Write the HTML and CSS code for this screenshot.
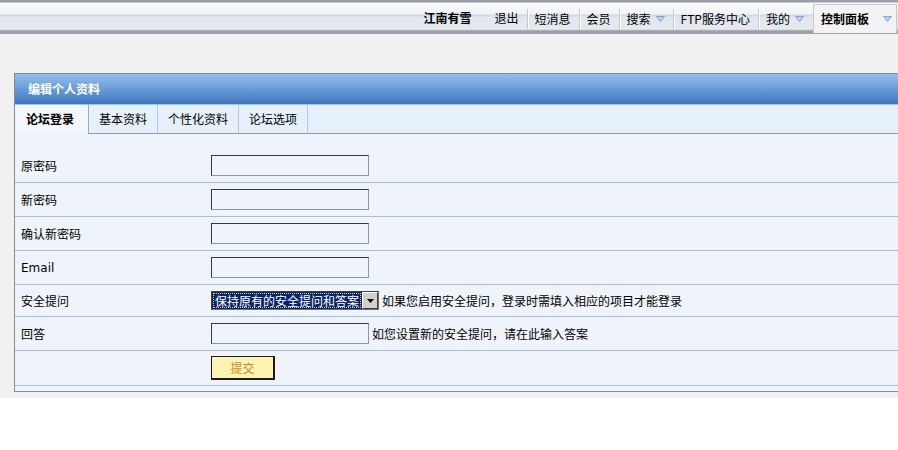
FILE: index.html
```html
<!DOCTYPE html>
<html lang="zh-CN">
<head>
<meta charset="utf-8">
<title>编辑个人资料</title>
<link rel="stylesheet" href="styles.css">
</head>
<body>
<div class="page">
  <div class="topbar">
    <ul class="nav">
      <li class="nav-item user">江南有雪</li>
      <li class="nav-item">退出</li>
      <li class="nav-item sep">短消息</li>
      <li class="nav-item sep">会员</li>
      <li class="nav-item sep">搜索<span class="arrow"><svg width="9" height="6" viewBox="0 0 9 6"><path d="M0.5 0.5 L8.5 0.5 L4.5 5.5 Z" fill="#bcd3ee" stroke="#7fa4d4" stroke-width="1"/></svg></span></li>
      <li class="nav-item sep">FTP服务中心</li>
      <li class="nav-item sep">我的<span class="arrow"><svg width="9" height="6" viewBox="0 0 9 6"><path d="M0.5 0.5 L8.5 0.5 L4.5 5.5 Z" fill="#bcd3ee" stroke="#7fa4d4" stroke-width="1"/></svg></span></li>
      <li class="nav-item current">控制面板<span class="arrow"><svg width="9" height="6" viewBox="0 0 9 6"><path d="M0.5 0.5 L8.5 0.5 L4.5 5.5 Z" fill="#bcd3ee" stroke="#7fa4d4" stroke-width="1"/></svg></span></li>
    </ul>
  </div>

  <div class="panel">
    <div class="panel-head">编辑个人资料</div>
    <ul class="tabs">
      <li class="tab active">论坛登录</li>
      <li class="tab">基本资料</li>
      <li class="tab">个性化资料</li>
      <li class="tab">论坛选项</li>
    </ul>
    <div class="form">
      <div class="row">
        <div class="label">原密码</div>
        <div class="field"><input class="txt" type="password"></div>
      </div>
      <div class="row">
        <div class="label">新密码</div>
        <div class="field"><input class="txt" type="password"></div>
      </div>
      <div class="row">
        <div class="label">确认新密码</div>
        <div class="field"><input class="txt" type="password"></div>
      </div>
      <div class="row">
        <div class="label latin">Email</div>
        <div class="field"><input class="txt" type="text"></div>
      </div>
      <div class="row row-short">
        <div class="label">安全提问</div>
        <div class="field">
          <div class="select">
            <span class="select-value"><span class="select-focus">保持原有的安全提问和答案</span></span>
            <span class="select-btn"><svg width="7" height="4" viewBox="0 0 7 4"><path d="M0 0 L7 0 L3.5 4 Z" fill="#000"/></svg></span>
          </div>
          <span class="hint">如果您启用安全提问，登录时需填入相应的项目才能登录</span>
        </div>
      </div>
      <div class="row">
        <div class="label">回答</div>
        <div class="field"><input class="txt" type="text"><span class="hint">如您设置新的安全提问，请在此输入答案</span></div>
      </div>
      <div class="row row-btn">
        <div class="label"></div>
        <div class="field"><button class="submit" type="button">提交</button></div>
      </div>
    </div>
  </div>
</div>
</body>
</html>
```
FILE: styles.css
```css
html, body {
  margin: 0;
  padding: 0;
  background: #ffffff;
  overflow: hidden;
}
body {
  font-family: "Noto Sans CJK SC", "DejaVu Sans", sans-serif;
  font-size: 12px;
  color: #000;
}
.page {
  background: #f1f1f1;
  padding-bottom: 6px;
}

/* top bar */
.topbar {
  height: 34px;
  background: linear-gradient(to bottom,
    #9b9ca3 0px, #9b9ca3 2px,
    #f7f9fb 3px, #f1f4f7 14px,
    #d3d9e6 15px, #d3d9e6 16px,
    #e2e7ee 17px, #e4e9ee 28px,
    #eef1f3 29px, #c3c6cd 30px,
    #9d9ea6 31px, #9d9ea6 34px);
  box-sizing: border-box;
}
.nav {
  list-style: none;
  margin: 0;
  padding: 0;
  display: flex;
  justify-content: flex-end;
  align-items: stretch;
  height: 31px;
}
.nav-item {
  display: flex;
  align-items: center;
  padding: 0 8px 0 7px;
  margin-top: 5px;
  height: 26px;
  line-height: 26px;
  white-space: nowrap;
}
.nav-item.user {
  font-weight: bold;
  padding-right: 16px;
}
.nav-item.sep {
  border-left: 1px solid #c4c8d0;
  box-shadow: inset 1px 0 0 #ffffff;
  margin-top: 9px;
  height: 20px;
  line-height: 20px;
  align-self: flex-start;
}
.arrow {
  display: inline-flex;
  margin-left: 5px;
}
.nav-item.current {
  font-weight: bold;
  background: #f3f3f3;
  border: 1px solid #c9c9c9;
  border-bottom: none;
  margin-top: 4px;
  height: 28px;
  padding: 0 0 0 7px;
  width: 75px;
  margin-left: 1px;
  margin-right: 1px;
}
.nav-item.current .arrow { margin-left: 14px; }

/* panel */
.panel {
  margin: 39px 0 0 14px;
  width: 900px;
  border: 1px solid #7c8ea3;
  background: #eff4fa;
}
.panel-head {
  height: 30px;
  line-height: 30px;
  padding-left: 13px;
  color: #ffffff;
  font-weight: bold;
  background: linear-gradient(to bottom, #93bfea 0%, #6e9fdb 45%, #5388cb 75%, #3f76bf 100%);
  border-bottom: 1px solid #98c6f2;
}
.tabs {
  list-style: none;
  margin: 0;
  padding: 0;
  display: flex;
  height: 28px;
  background: #e6f0fa;
  border-bottom: 1px solid #8e9cac;
}
.tab {
  padding: 0 10px;
  line-height: 28px;
  border-right: 1px solid #b8c8da;
  white-space: nowrap;
}
.tab.active {
  font-weight: bold;
  background: #f3f7fb;
  padding: 0 11px;
  width: 51px;
  height: 29px;
  border-right: 1px solid #9aa8b8;
}

/* form */
.form {
  padding: 15px 0 5px 0;
}
.row {
  display: flex;
  align-items: center;
  height: 33px;
  border-bottom: 1px solid #a8bdd4;
}
.row-short { height: 31px; }
.row-btn { height: 34px; }
.label {
  width: 190px;
  padding-left: 6px;
  flex: none;
}
.latin {
  font-family: "DejaVu Sans", "Noto Sans CJK SC", sans-serif;
  font-size: 12px;
}
.field {
  display: flex;
  align-items: center;
}
.txt {
  box-sizing: border-box;
  width: 158px;
  height: 21px;
  margin: 0;
  padding: 1px 3px;
  background: #eef4fa;
  border: 1px solid #7d9ab8;
  border-top-color: #2d3a48;
  border-left-color: #2d3a48;
  font: inherit;
}
.hint {
  margin-left: 3px;
  white-space: nowrap;
}
.select {
  display: flex;
  box-sizing: border-box;
  width: 168px;
  height: 19px;
  border: 1px solid #6e6e6e;
  border-top-color: #404040;
  border-left-color: #404040;
  background: #ffffff;
}
.select-value {
  flex: 1;
  background: #0a246a;
  color: #ffffff;
  padding: 1px;
  box-sizing: border-box;
  display: flex;
  overflow: hidden;
}
.select-focus {
  border: 1px dotted #f0d080;
  line-height: 13px;
  white-space: nowrap;
  overflow: hidden;
  flex: 1;
  padding-left: 1px;
}
.select-btn {
  width: 16px;
  flex: none;
  background: #d4d0c8;
  border: 1px solid;
  border-color: #ffffff #404040 #404040 #ffffff;
  box-sizing: border-box;
  display: flex;
  align-items: center;
  justify-content: center;
}
.submit {
  box-sizing: border-box;
  width: 64px;
  height: 24px;
  background: #fff3b4;
  border: 1px solid #1a1a1a;
  border-right-width: 2px;
  border-bottom-width: 2px;
  color: #c38a2a;
  font: inherit;
  padding: 0;
}
```
